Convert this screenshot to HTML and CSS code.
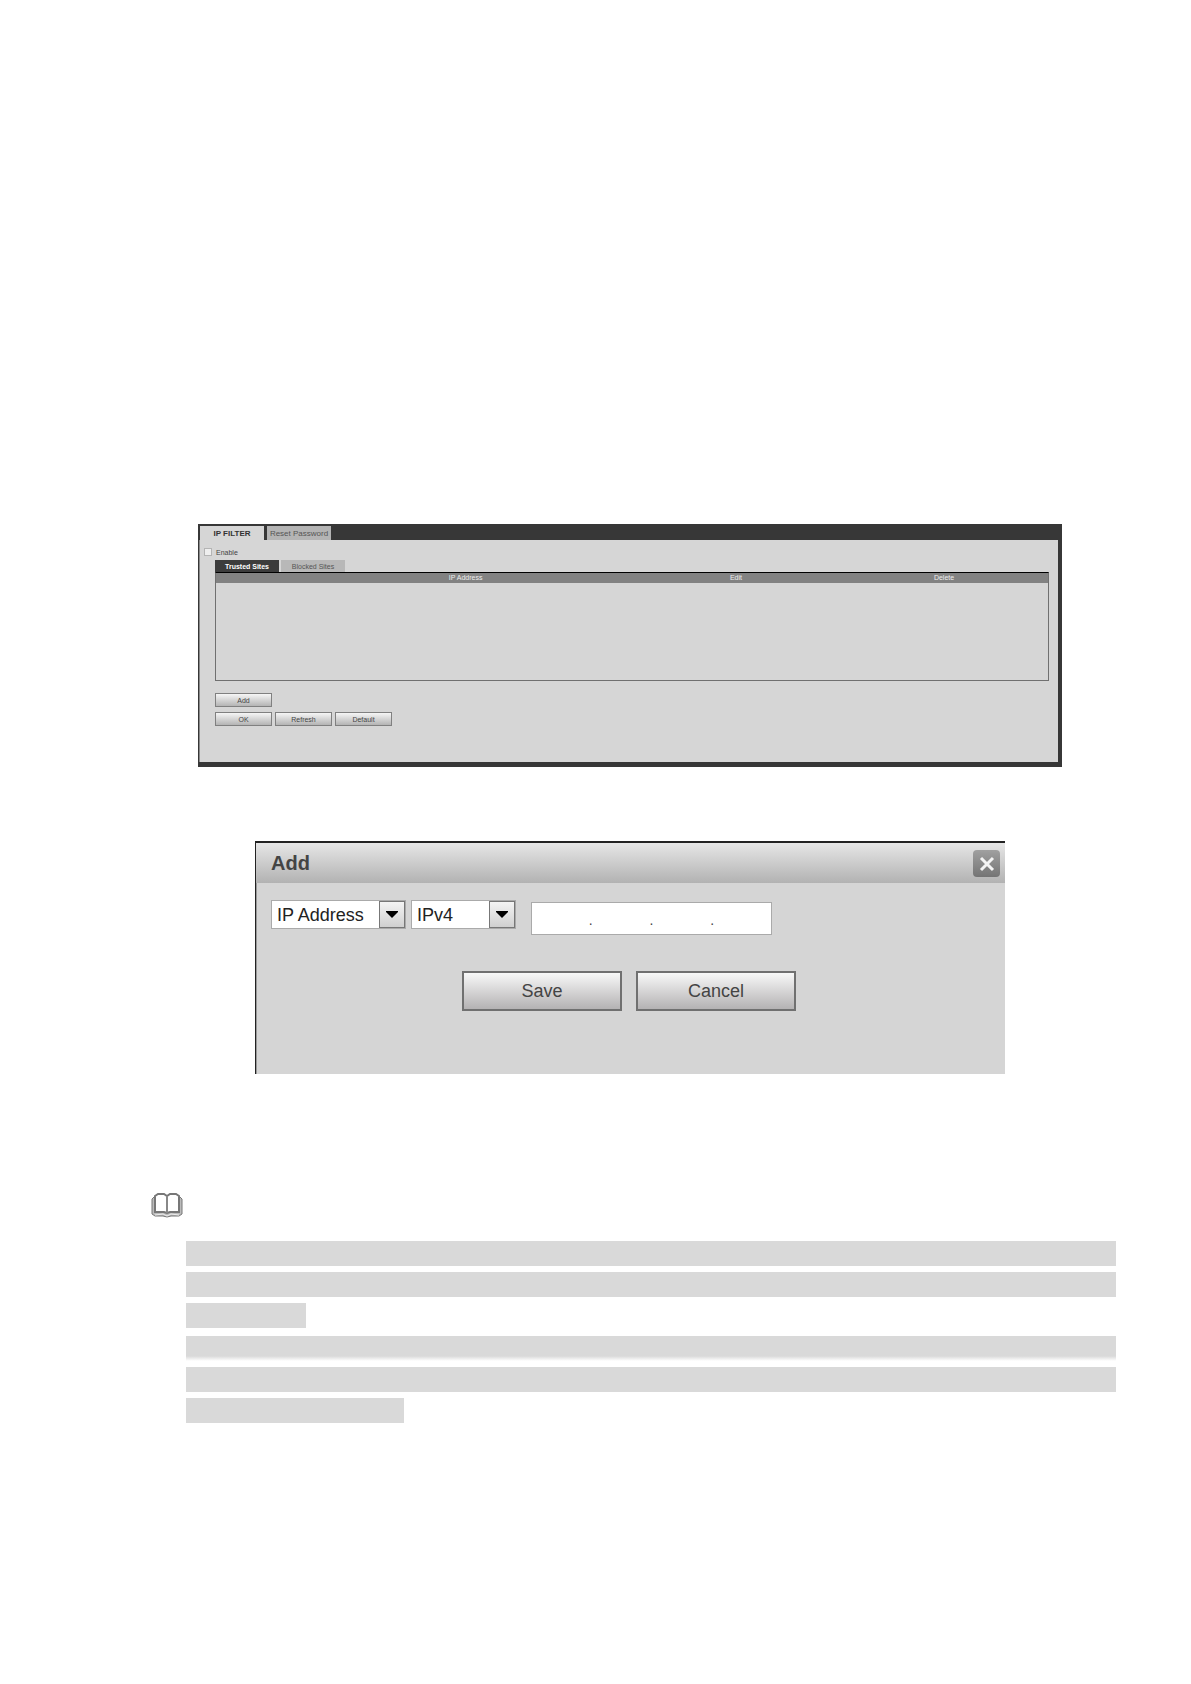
FILE: index.html
```
<!DOCTYPE html>
<html lang="en">
<head>
    <meta charset="UTF-8">
    <meta name="viewport" content="width=device-width, initial-scale=1.0">
    <title>IP Filter</title>
    <link rel="stylesheet" href="styles.css">
</head>
<body>
    <main class="page">
        <section class="panel">
            <nav class="tabs">
                <button type="button" class="tab active">IP FILTER</button>
                <button type="button" class="tab">Reset Password</button>
            </nav>

            <div class="panel-body">
                <div class="enable-row">
                    <input type="checkbox" id="enable" class="enable-box">
                    <label for="enable">Enable</label>
                </div>

                <div class="filter">
                    <div class="sub-tabs">
                        <button type="button" class="sub-tab active">Trusted Sites</button>
                        <button type="button" class="sub-tab">Blocked Sites</button>
                    </div>

                    <div class="site-list">
                        <table class="site-table">
                            <thead>
                                <tr>
                                    <th class="col-number"></th>
                                    <th class="col-address">IP Address</th>
                                    <th class="col-action">Edit</th>
                                    <th class="col-action">Delete</th>
                                </tr>
                            </thead>
                            <tbody></tbody>
                        </table>
                    </div>

                    <div class="button-row">
                        <button type="button" class="small-button">Add</button>
                    </div>
                    <div class="button-row">
                        <button type="button" class="small-button">OK</button>
                        <button type="button" class="small-button">Refresh</button>
                        <button type="button" class="small-button">Default</button>
                    </div>
                </div>
            </div>
        </section>

        <section class="dialog">
            <header class="dialog-header">
                <h2>Add</h2>
                <button type="button" class="close-button" aria-label="Close">
                    <svg viewBox="0 0 27 27" width="27" height="27">
                        <path d="M8 8 L20 20 M20 8 L8 20" stroke="#f4f4f4" stroke-width="3" fill="none"/>
                    </svg>
                </button>
            </header>

            <form class="dialog-form">
                <div class="fields">
                    <div class="selects">
                        <div class="select type-select">
                            <select aria-label="Type">
                                <option>IP Address</option>
                            </select>
                            <span class="arrow"><svg viewBox="0 0 12 7" width="12" height="7"><path d="M0 0H12V1L6 7L0 1Z"/></svg></span>
                        </div>
                        <div class="select version-select">
                            <select aria-label="IP version">
                                <option>IPv4</option>
                            </select>
                            <span class="arrow"><svg viewBox="0 0 12 7" width="12" height="7"><path d="M0 0H12V1L6 7L0 1Z"/></svg></span>
                        </div>
                    </div>

                    <div class="ip-input">
                        <input type="text" maxlength="3" aria-label="First octet">
                        <span>.</span>
                        <input type="text" maxlength="3" aria-label="Second octet">
                        <span>.</span>
                        <input type="text" maxlength="3" aria-label="Third octet">
                        <span>.</span>
                        <input type="text" maxlength="3" aria-label="Fourth octet">
                    </div>
                </div>

                <div class="dialog-buttons">
                    <button type="button" class="big-button">Save</button>
                    <button type="button" class="big-button">Cancel</button>
                </div>
            </form>
        </section>

        <section class="note">
            <svg class="book" viewBox="0 0 32 26" width="32" height="26">
                <path d="M4 4 L1 7 V22 L4 24 H12 Q16 26 20 24 H28 L31 22 V7 L28 4" fill="#bbb" stroke="#777" stroke-width="1"/>
                <path d="M4 4 L7 2 H13 L16 4 L19 2 H25 L28 4 V20 H19 L16 21 L13 20 H4 Z" fill="#fff" stroke="#777" stroke-width="2"/>
                <path d="M16 4 V21" stroke="#888" stroke-width="2"/>
                <path d="M4 23 L12 22 L16 24 L20 22 L28 23" fill="none" stroke="#eee" stroke-width="1"/>
            </svg>
            <div class="note-lines">
                <div class="line"></div>
                <div class="line"></div>
                <div class="line short"></div>
            </div>
            <div class="note-lines">
                <div class="line faded"></div>
                <div class="line"></div>
                <div class="line medium"></div>
            </div>
        </section>
    </main>
</body>
</html>
```
FILE: styles.css
```
* {
    box-sizing: border-box;
}
body {
    margin: 0;
    background-color: #fff;
    font-family: "Liberation Sans", Arial, sans-serif;
    color: #444;
}
button, input, select {
    font-family: inherit;
    color: inherit;
    margin: 0;
    padding: 0;
}
.page {
    min-height: 100vh;
    padding: 524px 75px 64px 151px;
}

/* IP filter panel */
.panel {
    margin: 0 54px 0 47px;
    background-color: #d6d6d6;
    border: solid #373737;
    border-width: 0 4px 5px 1px;
    font-size: 7px;
}
.tabs {
    display: flex;
    gap: 3px;
    height: 16px;
    padding: 2px 0 0 1px;
    background-color: #373737;
}
.tab {
    width: 64px;
    border: none;
    background-color: #b4b4b4;
    color: #555;
    font-size: 8px;
    white-space: nowrap;
}
.tab.active {
    background-color: #d6d6d6;
    color: #333;
    font-weight: bold;
}
.panel-body {
    min-height: 222px;
    padding: 8px 9px 0 4px;
    border-left: 1px solid #888;
}
.enable-row {
    display: flex;
    align-items: center;
    gap: 4px;
    height: 8px;
}
.enable-box {
    appearance: none;
    width: 8px;
    height: 8px;
    background-color: #eee;
    border: 1px solid #b4b4b4;
}
.filter {
    padding: 4px 0 0 11px;
}
.sub-tabs {
    display: flex;
    gap: 2px;
    height: 12px;
}
.sub-tab {
    width: 64px;
    border: none;
    background-color: #b8b8b8;
    color: #555;
    font-size: 7px;
}
.sub-tab.active {
    background-color: #3c3c3c;
    color: #fff;
    font-weight: bold;
}
.site-list {
    min-height: 109px;
    margin-bottom: 12px;
    border: 1px solid #707070;
    border-top-color: #000;
}
.site-table {
    width: 100%;
    table-layout: fixed;
    border-collapse: collapse;
}
.site-table th {
    height: 10px;
    padding: 0;
    background-color: #828282;
    color: #eee;
    font-weight: normal;
    line-height: 10px;
    text-align: center;
}
.col-number {
    width: 10%;
}
.col-address {
    width: 40%;
}
.col-action {
    width: 25%;
}
.button-row {
    display: flex;
    gap: 3px;
    margin-bottom: 5px;
}
.small-button {
    width: 57px;
    height: 14px;
    border: 1px solid #808080;
    background: linear-gradient(#f6f6f6, #b4b4b4);
    font-size: 7px;
}

/* Add dialog */
.dialog {
    min-height: 233px;
    margin: 74px 111px 0 104px;
    background-color: #d5d5d5;
    border-top: 2px solid #222;
    border-left: 1px solid #222;
}
.dialog-header {
    display: flex;
    align-items: center;
    justify-content: space-between;
    height: 40px;
    padding: 0 5px 0 15px;
    background: linear-gradient(#e6e6e6, #b2b2b2);
}
.dialog-header h2 {
    margin: 0;
    font-size: 20px;
}
.close-button {
    width: 27px;
    height: 27px;
    border: none;
    border-radius: 4px;
    background: linear-gradient(#a0a0a0, #747474);
}
.close-button svg {
    display: block;
}
.dialog-form {
    padding: 17px 18px 17px 15px;
    border-left: 1px solid #999;
    min-height: 191px;
    padding-left: 14px;
}
.fields {
    display: flex;
    align-items: flex-start;
    gap: 15px;
}
.selects {
    display: flex;
    gap: 5px;
}
.select {
    display: grid;
    height: 29px;
    border: 1px solid #aaa;
    background-color: #fff;
}
.type-select {
    width: 135px;
}
.version-select {
    width: 105px;
}
.select select {
    grid-area: 1 / 1;
    appearance: none;
    width: 100%;
    padding-left: 5px;
    border: none;
    background: none;
    color: #222;
    font-size: 18px;
}
.arrow {
    grid-area: 1 / 1;
    justify-self: end;
    display: flex;
    align-items: center;
    justify-content: center;
    width: 26px;
    border: 1px solid #777;
    background: linear-gradient(#f4f4f4, #d0d0d0);
    pointer-events: none;
}
.ip-input {
    display: flex;
    width: 241px;
    height: 33px;
    margin-top: 2px;
    border: 1px solid #aaa;
    background-color: #fff;
}
.ip-input input {
    flex: 1;
    min-width: 0;
    border: none;
    background: none;
    font-size: 14px;
    text-align: center;
}
.ip-input span {
    width: 4px;
    font-size: 14px;
    line-height: 34px;
}
.dialog-buttons {
    display: flex;
    justify-content: center;
    gap: 14px;
    margin-top: 36px;
}
.big-button {
    width: 160px;
    height: 40px;
    border: 2px solid #707070;
    background: linear-gradient(#f8f8f8, #b4b2b3);
    font-size: 18px;
}

/* Note */
.note {
    margin-top: 118px;
}
.book {
    display: block;
    margin-bottom: 23px;
}
.note-lines {
    display: flex;
    flex-direction: column;
    gap: 6px;
    margin: 0 0 8px 35px;
}
.line {
    height: 25px;
    background-color: #d9d9d9;
}
.line.short {
    width: 120px;
}
.line.medium {
    width: 218px;
}
.line.faded {
    background: linear-gradient(#d9d9d9 80%, #fff);
}
```
